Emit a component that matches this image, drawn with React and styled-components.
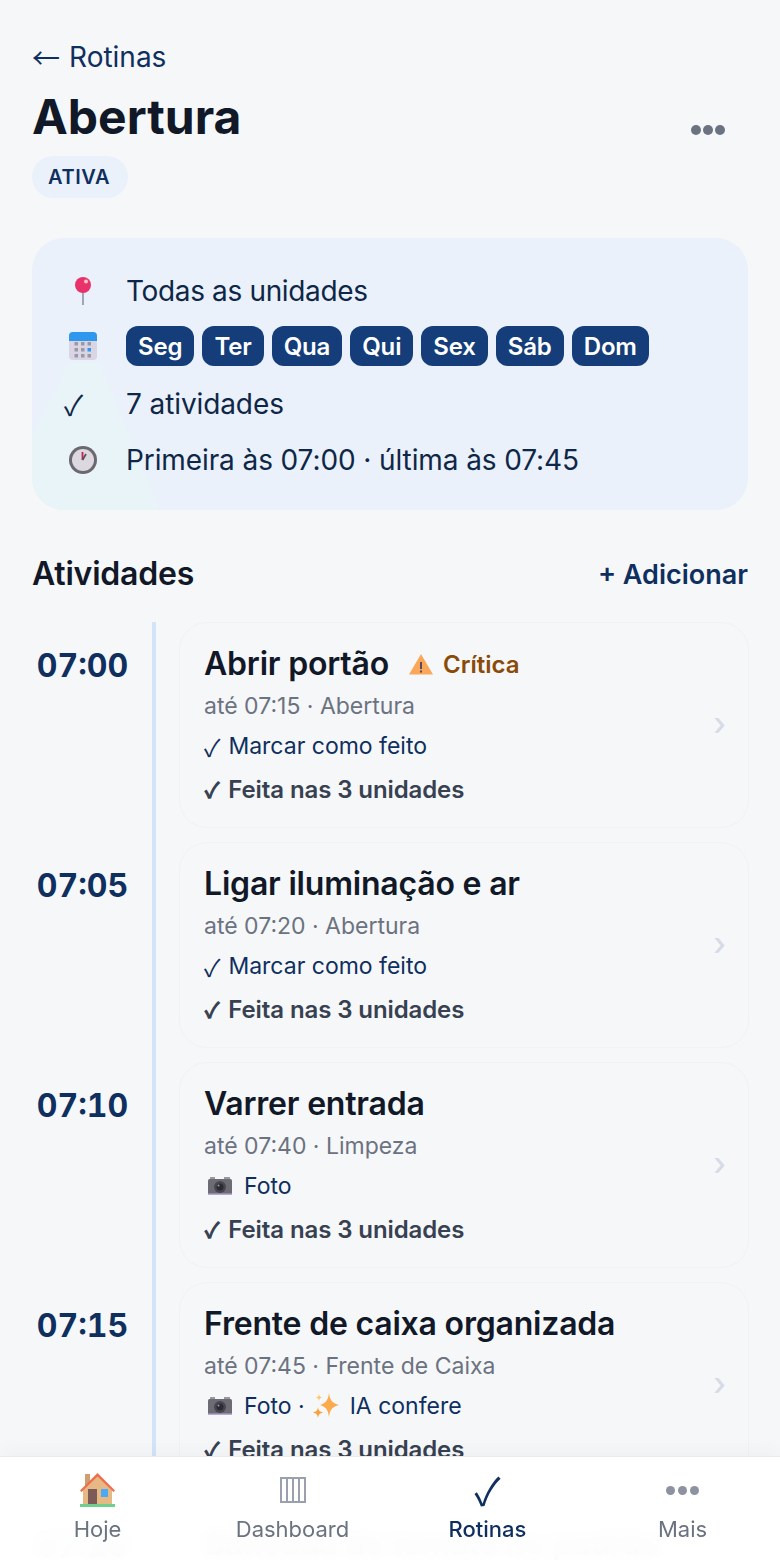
import React from "react";
import styled, { createGlobalStyle } from "styled-components";

const GlobalStyle = createGlobalStyle`
  html, body {
    margin: 0;
    padding: 0;
    background: #f6f7f9;
    font-family: "Inter", "Noto Sans", sans-serif;
    color: #111827;
    overflow: hidden;
    height: 1560px;
  }
  * { box-sizing: border-box; }
`;

const Page = styled.main`
  width: 780px;
  height: 1560px;
  overflow: hidden;
  padding: 40px 31px 0 32px;
`;

const Header = styled.header`
  display: flex;
  justify-content: space-between;
  align-items: flex-start;
`;

const BackLink = styled.a`
  display: flex;
  gap: 9px;
  font-size: 28px;
  line-height: 34px;
  color: #0f2f5f;
`;

const Arrow = styled.span`
  font-family: "Noto Sans CJK JP", sans-serif;
`;

const Title = styled.h1`
  margin: 14px 0 10px;
  font-size: 48px;
  line-height: 58px;
  font-weight: 700;
  color: #111827;
`;

const Badge = styled.span`
  display: inline-block;
  padding: 0 18px 0 16px;
  height: 42px;
  line-height: 42px;
  border-radius: 21px;
  background: #eaf1fb;
  color: #0f2f5f;
  font-size: 20px;
  font-weight: 600;
  letter-spacing: 0.6px;
`;

const DotRow = styled.div`
  display: flex;
  gap: ${(p) => p.$gap}px;
  margin: ${(p) => p.$margin || 0};
`;

const Dot = styled.i`
  display: block;
  width: ${(p) => p.$size}px;
  height: ${(p) => p.$size}px;
  border-radius: 50%;
  background: ${(p) => p.$color};
`;

const Summary = styled.section`
  position: relative;
  overflow: hidden;
  margin-top: 40px;
  width: 716px;
  height: 272px;
  padding: 25px 32px;
  border-radius: 32px;
  background: #eaf1fb;
  display: flex;
  flex-direction: column;
  &::before {
    content: "";
    position: absolute;
    left: 0;
    bottom: 0;
    width: 128px;
    height: 148px;
    background: #e8f4f7;
    clip-path: polygon(30% 0, 52% 0, 100% 100%, 0 100%, 0 50%);
  }
`;

const SummaryRow = styled.div`
  position: relative;
  flex: 0 0 56px;
  display: flex;
  align-items: center;
  font-size: 28px;
  color: #0f2747;
  &:nth-child(2) {
    padding-bottom: 2px;
  }
  &:nth-child(n + 3) {
    padding-top: 1px;
  }
`;

const RowText = styled.span`
  letter-spacing: ${(p) => p.$tight || -0.1}px;
`;

const RowIcon = styled.span`
  flex: 0 0 62px;
  display: flex;
  justify-content: flex-start;
  svg {
    margin-left: 5px;
  }
`;

const CheckGlyph = styled.span`
  font-family: "Noto Sans CJK JP", "DejaVu Sans", sans-serif;
  font-size: ${(p) => p.$size || 28}px;
  font-weight: 400;
  margin-left: ${(p) => (p.$heavy ? 1 : 0)}px;
  -webkit-text-stroke: ${(p) => (p.$heavy ? "1.2px currentColor" : "0")};
`;

const Chips = styled.div`
  display: flex;
  gap: 8px;
`;

const Chip = styled.span`
  height: 40px;
  line-height: 41px;
  padding: 0 12px;
  border-radius: 12px;
  background: #143d7a;
  color: #fff;
  font-size: 24px;
  font-weight: 600;
  letter-spacing: -0.15px;
`;

const SectionHead = styled.div`
  display: flex;
  justify-content: space-between;
  align-items: center;
  margin: 40px 1px 26px 0;
  height: 46px;
`;

const SectionTitle = styled.h2`
  margin: 0;
  font-size: 32px;
  font-weight: 600;
  letter-spacing: -0.2px;
  color: #111827;
`;

const AddLink = styled.a`
  padding-top: 2px;
  font-size: 27px;
  font-weight: 600;
  color: #0f2f5f;
`;

const Row = styled.article`
  display: grid;
  grid-template-columns: 120px 1fr;
`;

const Time = styled.div`
  padding-top: 23px;
  padding-right: 19px;
  text-align: center;
  font-size: 32px;
  line-height: 42px;
  font-weight: 700;
  font-variant-numeric: tabular-nums;
  color: #0f2f5f;
`;

const Track = styled.div`
  border-left: 4px solid #d3e3f8;
  padding: 0 0 14px 23px;
`;

const Card = styled.div`
  position: relative;
  height: 206px;
  padding: 19px 24px;
  border: 1px solid #f1f2f5;
  border-radius: 28px;
  background: #f6f7f9;
`;

const CardTitle = styled.div`
  display: flex;
  align-items: center;
  height: 42px;
  font-size: 32px;
  font-weight: 600;
  letter-spacing: -0.2px;
  color: #111827;
`;

const Critical = styled.span`
  display: inline-flex;
  align-items: center;
  gap: 10px;
  margin: 2px 0 0 20px;
  font-size: 24px;
  font-weight: 600;
  letter-spacing: 0;
  color: #8a4b08;
`;

const Meta = styled.div`
  margin-top: 3px;
  font-size: 23px;
  line-height: 38px;
  color: #6b7280;
`;

const Action = styled.div`
  display: flex;
  align-items: center;
  gap: 8px;
  height: 42px;
  font-size: 23px;
  color: #0f2f5f;
`;

const Done = styled.div`
  display: flex;
  align-items: center;
  gap: 9px;
  height: 44px;
  font-size: 24px;
  font-weight: 600;
  letter-spacing: -0.1px;
  color: #374151;
`;

const Chevron = styled.span`
  position: absolute;
  right: 22px;
  top: 49%;
  transform: translateY(-50%);
  color: #d8dbe6;
  font-size: 32px;
  font-weight: 500;
`;

const BottomNav = styled.nav`
  position: fixed;
  left: 0;
  bottom: 0;
  width: 780px;
  height: 104px;
  display: grid;
  grid-template-columns: repeat(4, 1fr);
  background: rgba(255, 255, 255, 0.975);
  backdrop-filter: blur(8px);
  border-top: 1px solid #e9eaee;
  box-shadow: 0 -6px 18px rgba(17, 24, 39, 0.03);
`;

const NavItem = styled.a`
  display: flex;
  flex-direction: column;
  align-items: center;
  padding-top: 13px;
  font-size: 22px;
  line-height: 26px;
  font-weight: ${(p) => (p.$active ? 500 : 400)};
  color: ${(p) => (p.$active ? "#0f2f5f" : "#6b7280")};
`;

const NavIcon = styled.span`
  display: flex;
  align-items: center;
  justify-content: center;
  height: 40px;
  margin-bottom: 6px;
`;

const CameraWrap = styled.span`
  display: flex;
  margin: 0 4px;
`;

const SparkleWrap = styled.span`
  display: flex;
  margin-right: 3px;
`;

const PinIcon = () => (
  <svg width="28" height="30" viewBox="0 0 28 30">
    <rect x="13" y="14" width="2" height="15" fill="#a0a6b4" />
    <circle cx="14" cy="9" r="8" fill="#e9326a" />
    <circle cx="17" cy="5.500" r="2" fill="#f9c6bb" />
  </svg>
);

const CalendarIcon = () => (
  <svg width="28" height="28" viewBox="0 0 28 28">
    <rect width="28" height="28" rx="4" fill="#d9d5e4" />
    <path d="M0 9V4a4 4 0 0 1 4-4h20a4 4 0 0 1 4 4v5z" fill="#2f97ee" />
    {[10, 16, 22].map((y) =>
      [5.5, 12, 18.5].map((x) => (
        <rect key={`${x}-${y}`} x={x} y={y} width="3.500" height="3.500" fill={x === 18.5 && y === 16 ? "#2f97ee" : "#9a9aa6"} />
      ))
    )}
  </svg>
);

const ClockIcon = () => (
  <svg width="28" height="28" viewBox="0 0 28 28">
    <circle cx="14" cy="14" r="14" fill="#6b6870" />
    <circle cx="14" cy="14" r="11" fill="#dcd8e0" />
    <path d="M13.500 14V6" stroke="#c2224f" strokeWidth="1.800" />
    <path d="M13.500 14l3.500-6" stroke="#57535c" strokeWidth="1.800" />
  </svg>
);

const CameraIcon = () => (
  <svg width="24" height="20" viewBox="0 0 24 20">
    <rect x="2" y="1" width="5" height="3" fill="#9a98a0" />
    <rect x="16" y="1" width="6" height="3" fill="#9a98a0" />
    <rect y="3" width="24" height="16" rx="1.500" fill="#6d6b74" />
    <rect y="17.500" width="24" height="1.500" fill="#b9a8d6" />
    <circle cx="12" cy="11" r="6" fill="#48464e" />
    <circle cx="12" cy="11" r="3.500" fill="#2c2b33" />
    <circle cx="10.500" cy="9.500" r="1" fill="#9e9ea6" />
  </svg>
);

const SparkleIcon = () => (
  <svg width="26" height="26" viewBox="0 0 26 26">
    <path d="M16 0c1 7.500 3 10 10 12-7 2-9 4.500-10 12-1-7.500-3-10-9-12 6-2 8-4.500 9-12z" fill="#fbab4d" />
    <path d="M5 14c.6 3.500 1.400 4.500 5 5.500-3.600 1-4.400 2-5 5.500-.6-3.500-1.400-4.500-5-5.500 3.600-1 4.400-2 5-5.500z" fill="#f9a03f" />
    <path d="M6 1c.4 2.300 1 3 3 3.500-2 .6-2.600 1.200-3 3.500-.4-2.300-1-2.900-3-3.500 2-.5 2.600-1.200 3-3.500z" fill="#fcc66a" />
  </svg>
);

const WarningIcon = () => (
  <svg width="24" height="22" viewBox="0 0 24 22">
    <path d="M12 1L24 21.500H0z" fill="#fba75a" />
    <rect x="11" y="9" width="2" height="7" fill="#5b4a58" />
    <rect x="11" y="17.500" width="2" height="2" fill="#5b4a58" />
  </svg>
);

const HouseIcon = () => (
  <svg width="36" height="36" viewBox="0 0 36 36">
    <rect x="5" y="2" width="5" height="12" fill="#cf9f70" />
    <path d="M3 18L17.500 3 32 18v14H3z" fill="#e6b884" />
    <path d="M0 18.500L17.500 1 35 18.500 33.500 20 17.500 4.500 1.500 20z" fill="#ee6e4e" />
    <rect x="8" y="17" width="9" height="15" fill="#7b5a58" />
    <rect x="21" y="17" width="7" height="8" fill="#4aa8f4" />
    <rect y="32" width="35" height="3" fill="#6ed08c" />
  </svg>
);

const DashboardIcon = () => (
  <svg width="26" height="26" viewBox="0 0 26 26" fill="none" stroke="#9aa0ad" strokeWidth="2">
    <rect x="1" y="1" width="24" height="24" />
    <path d="M7 1v24M13 1v24M19 1v24" />
  </svg>
);

const activities = [
  { time: "07:00", title: "Abrir portão", until: "até 07:15 · Abertura", critical: true },
  { time: "07:05", title: "Ligar iluminação e ar", until: "até 07:20 · Abertura" },
  { time: "07:10", title: "Varrer entrada", until: "até 07:40 · Limpeza", photo: true },
  { time: "07:15", title: "Frente de caixa organizada", until: "até 07:45 · Frente de Caixa", photo: true, ai: true },
  { time: "07:20", title: "Bancada de tomate no padrão", until: "até 07:50 · Cozinha", photo: true },
];

const days = ["Seg", "Ter", "Qua", "Qui", "Sex", "Sáb", "Dom"];

export default function App() {
  return (
    <>
      <GlobalStyle />
      <Page>
        <Header>
          <div>
            <BackLink><Arrow>←</Arrow> Rotinas</BackLink>
            <Title>Abertura</Title>
            <Badge>ATIVA</Badge>
          </div>
          <DotRow $gap={2} $margin="85px 24px 0 0">
            <Dot $size={10} $color="#6b7280" />
            <Dot $size={10} $color="#6b7280" />
            <Dot $size={10} $color="#6b7280" />
          </DotRow>
        </Header>

        <Summary>
          <SummaryRow>
            <RowIcon><PinIcon /></RowIcon>
            <RowText $tight={-0.35}>Todas as unidades</RowText>
          </SummaryRow>
          <SummaryRow>
            <RowIcon><CalendarIcon /></RowIcon>
            <Chips>
              {days.map((d) => <Chip key={d}>{d}</Chip>)}
            </Chips>
          </SummaryRow>
          <SummaryRow>
            <RowIcon><CheckGlyph>✓</CheckGlyph></RowIcon>
            <RowText>7 atividades</RowText>
          </SummaryRow>
          <SummaryRow>
            <RowIcon><ClockIcon /></RowIcon>
            <RowText>Primeira às 07:00 · última às 07:45</RowText>
          </SummaryRow>
        </Summary>

        <SectionHead>
          <SectionTitle>Atividades</SectionTitle>
          <AddLink>+ Adicionar</AddLink>
        </SectionHead>

        {activities.map((a) => (
          <Row key={a.time}>
            <Time>{a.time}</Time>
            <Track>
              <Card>
                <CardTitle>
                  {a.title}
                  {a.critical && (
                    <Critical><WarningIcon />Crítica</Critical>
                  )}
                </CardTitle>
                <Meta>{a.until}</Meta>
                {a.photo ? (
                  <Action>
                    <CameraWrap><CameraIcon /></CameraWrap>
                    <span>Foto{a.ai && " ·"}</span>
                    {a.ai && <SparkleWrap><SparkleIcon /></SparkleWrap>}
                    {a.ai && <span>IA confere</span>}
                  </Action>
                ) : (
                  <Action><CheckGlyph $size={24}>✓</CheckGlyph>Marcar como feito</Action>
                )}
                <Done><CheckGlyph $size={21} $heavy>✓</CheckGlyph>Feita nas 3 unidades</Done>
                <Chevron>›</Chevron>
              </Card>
            </Track>
          </Row>
        ))}
      </Page>

      <BottomNav>
        <NavItem>
          <NavIcon><HouseIcon /></NavIcon>
          Hoje
        </NavItem>
        <NavItem>
          <NavIcon><DashboardIcon /></NavIcon>
          Dashboard
        </NavItem>
        <NavItem $active>
          <NavIcon><CheckGlyph $size={38}>✓</CheckGlyph></NavIcon>
          Rotinas
        </NavItem>
        <NavItem>
          <NavIcon>
            <DotRow $gap={3}>
              <Dot $size={9} $color="#8d92a0" />
              <Dot $size={9} $color="#8d92a0" />
              <Dot $size={9} $color="#8d92a0" />
            </DotRow>
          </NavIcon>
          Mais
        </NavItem>
      </BottomNav>
    </>
  );
}
